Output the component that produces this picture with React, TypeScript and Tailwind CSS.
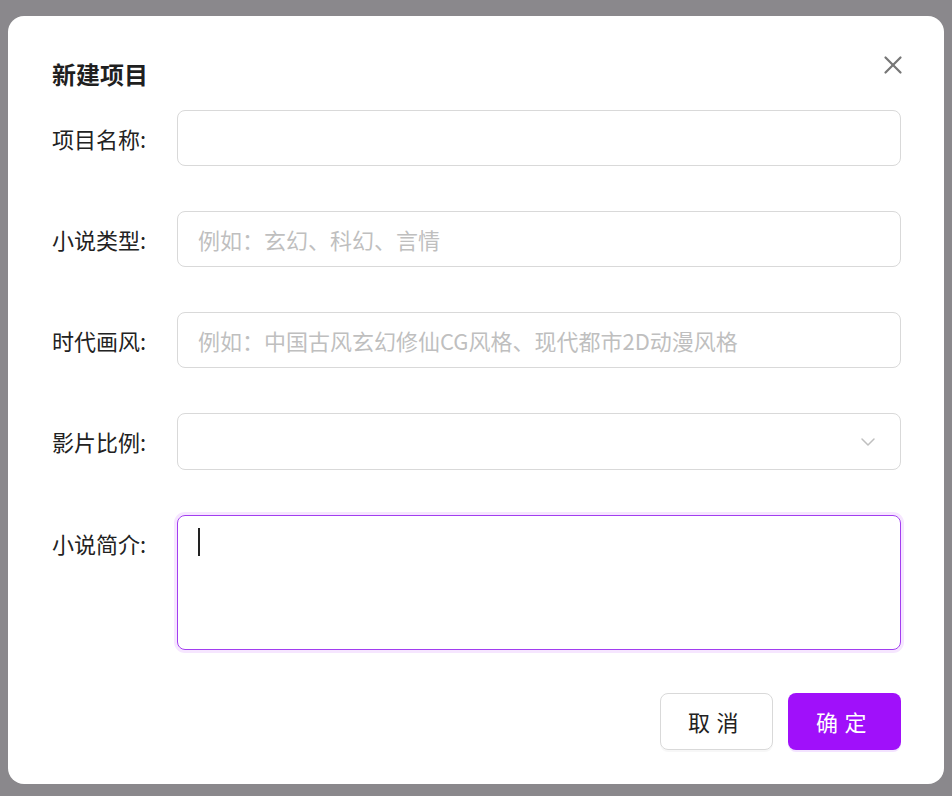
import { X, ChevronDown } from "lucide-react";

const font = { fontFamily: '"Noto Sans CJK SC", "Noto Sans", sans-serif' };

function Row({ label, children, top }: { label: string; children: React.ReactNode; top?: boolean }) {
  return (
    <div className={`flex ${top ? "items-start" : "items-center"}`}>
      <div className="w-[125px] shrink-0 h-[56px] flex items-center text-[22px] text-[#222]">{label}:</div>
      {children}
    </div>
  );
}

export default function App() {
  return (
    <div className="w-[952px] h-[796px] bg-[#8a888c] pt-4 pl-2 overflow-hidden" style={font}>
      <div className="relative w-[936px] h-[768px] bg-white rounded-2xl pl-11 pr-[43px] pt-[38px]">
        <button className="absolute right-[36px] top-[34px] text-[#777]">
          <X size={30} strokeWidth={1.8} />
        </button>
        <h1 className="text-[24px] font-bold text-[#1f1f1f] leading-[40px]">新建项目</h1>
        <div className="mt-[16px] flex flex-col gap-[45px]">
          <Row label="项目名称">
            <div className="flex-1 h-[56px] border border-[#d9d9d9] rounded-lg" />
          </Row>
          <Row label="小说类型">
            <div className="flex-1 h-[56px] border border-[#d9d9d9] rounded-lg px-5 flex items-center text-[22px] text-[#bfbfbf]">
              例如：玄幻、科幻、言情
            </div>
          </Row>
          <Row label="时代画风">
            <div className="flex-1 h-[56px] border border-[#d9d9d9] rounded-lg px-5 flex items-center text-[22px] text-[#bfbfbf]">
              例如：中国古风玄幻修仙CG风格、现代都市2D动漫风格
            </div>
          </Row>
          <Row label="影片比例">
            <div className="flex-1 h-[57px] border border-[#d9d9d9] rounded-lg pr-5 flex items-center justify-end text-[#bfbfbf]">
              <ChevronDown size={24} strokeWidth={1.5} />
            </div>
          </Row>
          <Row label="小说简介" top>
            <div className="flex-1 h-[135px] border border-[#a23ef0] rounded-lg shadow-[0_0_0_3px_#f6e6ff] px-5 pt-3">
              <div className="w-[2px] h-[28px] bg-[#222]" />
            </div>
          </Row>
        </div>
        <div className="mt-[43px] flex justify-end gap-[15px]">
          <button className="w-[113px] h-[57px] border border-[#d9d9d9] rounded-lg text-[22px] tracking-[0.3em] text-[#222] shadow-[0_2px_0_rgba(0,0,0,0.03)]">取消</button>
          <button className="w-[113px] h-[57px] rounded-lg bg-[#a010fa] text-white text-[22px] tracking-[0.3em] shadow-[0_2px_0_#f3e3ff]">确定</button>
        </div>
      </div>
    </div>
  );
}
